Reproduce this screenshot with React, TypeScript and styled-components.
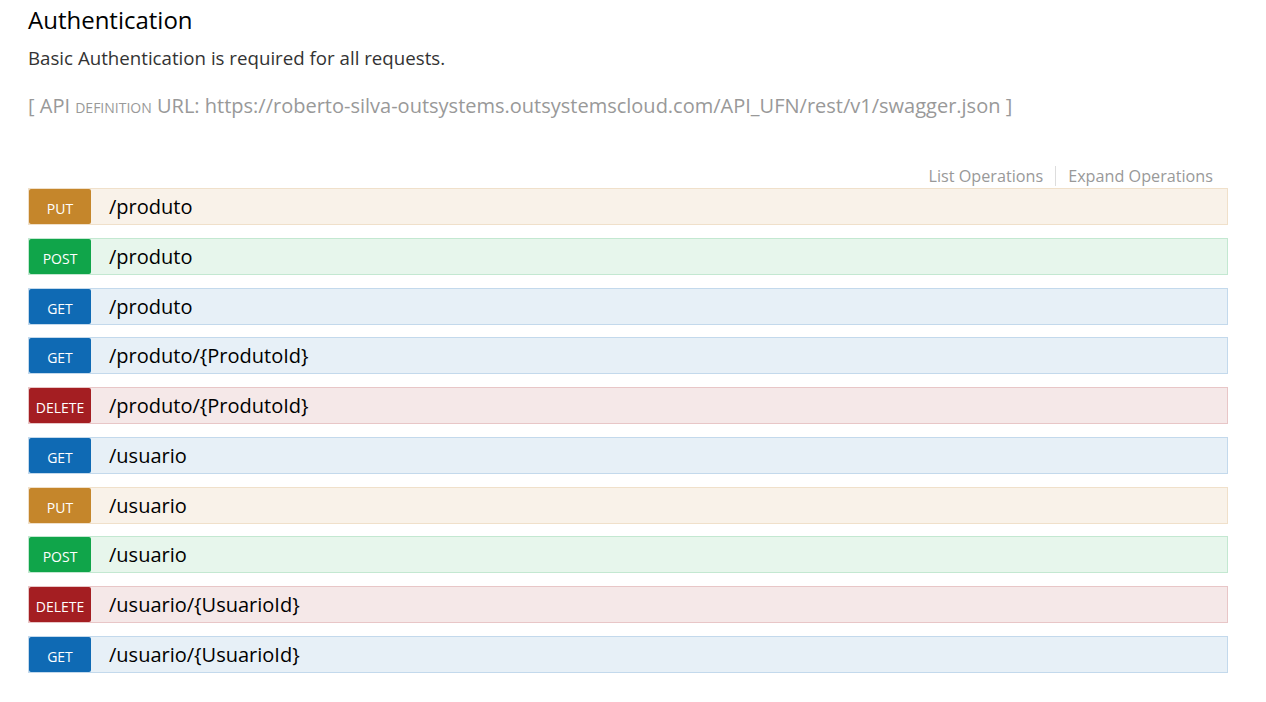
import styled, { createGlobalStyle } from 'styled-components'

enum Method {
  Get = 'GET',
  Post = 'POST',
  Put = 'PUT',
  Delete = 'DELETE',
}

interface Operation {
  method: Method
  path: string
}

const palette: Record<Method, { badge: string; background: string; border: string }> = {
  [Method.Get]: { badge: '#0f6ab4', background: '#e7f0f7', border: '#c3d9ec' },
  [Method.Post]: { badge: '#10a54a', background: '#e7f6ec', border: '#c3e8d1' },
  [Method.Put]: { badge: '#c5862b', background: '#f9f2e9', border: '#f0e0ca' },
  [Method.Delete]: { badge: '#a41e22', background: '#f5e8e8', border: '#e8c6c7' },
}

const operations: Operation[] = [
  { method: Method.Put, path: '/produto' },
  { method: Method.Post, path: '/produto' },
  { method: Method.Get, path: '/produto' },
  { method: Method.Get, path: '/produto/{ProdutoId}' },
  { method: Method.Delete, path: '/produto/{ProdutoId}' },
  { method: Method.Get, path: '/usuario' },
  { method: Method.Put, path: '/usuario' },
  { method: Method.Post, path: '/usuario' },
  { method: Method.Delete, path: '/usuario/{UsuarioId}' },
  { method: Method.Get, path: '/usuario/{UsuarioId}' },
]

const GlobalStyle = createGlobalStyle`
  html, body {
    margin: 0;
    padding: 0;
    background: #ffffff;
    font-family: 'Open Sans', 'Noto Sans', sans-serif;
  }
`

const StyledPage = styled.main`
  width: 1200px;
  padding: 4px 0 0 28px;
`

const StyledTitle = styled.h2`
  margin: 0;
  font-weight: 400;
  font-size: 24px;
  line-height: 32px;
  color: #000;
`

const StyledDescription = styled.p`
  margin: 10px 0 0;
  font-size: 18.7px;
  line-height: 24px;
  color: #333;
`

const StyledDefinition = styled.p`
  margin: 23px 0 0;
  font-size: 20px;
  line-height: 26px;
  color: #999;
`

const StyledSmallCaps = styled.span`
  font-variant: small-caps;
  text-transform: lowercase;
`

const StyledOperationsBar = styled.ul`
  display: flex;
  justify-content: flex-end;
  margin: 47px 0 0;
  padding: 0 3px 0 0;
  list-style: none;
  height: 20px;
`

const StyledOperationsLink = styled.li<{ $first?: boolean }>`
  padding: 0 12px;
  font-size: 16.2px;
  line-height: 20px;
  color: #999;
  border-left: ${(props) => (props.$first ? 'none' : '1px solid #ddd')};
`

const StyledList = styled.ul`
  display: flex;
  flex-direction: column;
  gap: 12.78px;
  margin: 2px 0 0;
  padding: 0;
  list-style: none;
`

const StyledRow = styled.li<{ $method: Method }>`
  display: flex;
  align-items: center;
  box-sizing: border-box;
  height: 37px;
  border: 1px solid ${(props) => palette[props.$method].border};
  background: ${(props) => palette[props.$method].background};
`

const StyledBadge = styled.span<{ $method: Method }>`
  display: flex;
  justify-content: center;
  align-items: center;
  box-sizing: border-box;
  width: 62px;
  height: 35px;
  padding-top: 4px;
  border-radius: 2px;
  background: ${(props) => palette[props.$method].badge};
  color: #fff;
  font-size: 14px;
`

const StyledPath = styled.span`
  padding-left: 18px;
  font-size: 20px;
  color: #000;
`

export default function App() {
  return (
    <>
      <GlobalStyle />
      <StyledPage>
        <StyledTitle>Authentication</StyledTitle>
        <StyledDescription>
          Basic Authentication is required for all requests.
        </StyledDescription>
        <StyledDefinition>
          [ API <StyledSmallCaps>Definition</StyledSmallCaps> URL:{' '}
          https://roberto-silva-outsystems.outsystemscloud.com/API_UFN/rest/v1/swagger.json
          ]
        </StyledDefinition>
        <StyledOperationsBar>
          <StyledOperationsLink $first>List Operations</StyledOperationsLink>
          <StyledOperationsLink>Expand Operations</StyledOperationsLink>
        </StyledOperationsBar>
        <StyledList>
          {operations.map((operation, index) => (
            <StyledRow key={index} $method={operation.method}>
              <StyledBadge $method={operation.method}>
                {operation.method}
              </StyledBadge>
              <StyledPath>{operation.path}</StyledPath>
            </StyledRow>
          ))}
        </StyledList>
      </StyledPage>
    </>
  )
}
